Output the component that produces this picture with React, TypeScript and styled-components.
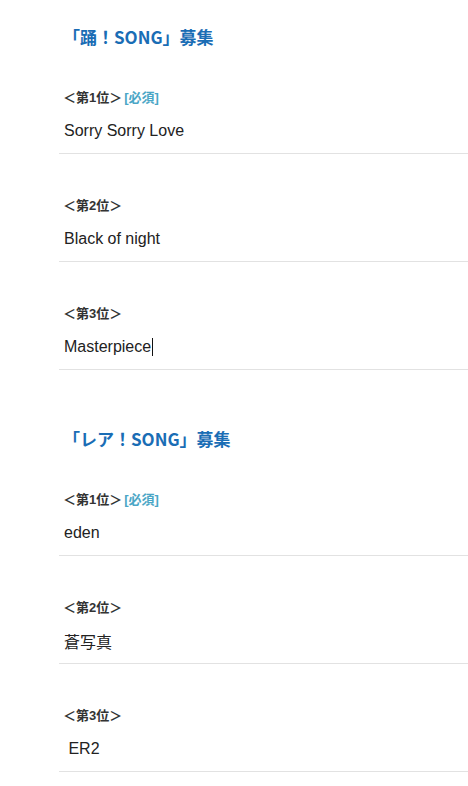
import styled, { createGlobalStyle } from "styled-components";

const GlobalStyle = createGlobalStyle`
  html, body {
    margin: 0;
    padding: 0;
    background: #ffffff;
  }
  body {
    font-family: "Liberation Sans", "Noto Sans CJK JP", sans-serif;
    color: #222222;
  }
`;

const Page = styled.div`
  display: flex;
  flex-direction: column;
  gap: 56px;
  padding: 24px 0 0 59px;
`;

const Section = styled.section`
  display: flex;
  flex-direction: column;
  gap: 38px;
`;

const SectionTitle = styled.h2`
  margin: 0;
  padding-left: 4px;
  font-family: "Noto Sans CJK JP", sans-serif;
  font-size: 17px;
  font-weight: 700;
  line-height: 26px;
  color: #1a6db5;
`;

const List = styled.div`
  display: flex;
  flex-direction: column;
  gap: 42px;
`;

const Item = styled.div`
  display: flex;
  flex-direction: column;
  border-bottom: 1px solid #e2e2e2;
`;

const Label = styled.div`
  padding-left: 4px;
  font-family: "Liberation Sans", "Noto Sans CJK JP", sans-serif;
  font-size: 13px;
  font-weight: 700;
  line-height: 20px;
  color: #333333;
`;

const Required = styled.span`
  margin-left: 2px;
  color: #4aa6c6;
`;

const Field = styled.div`
  display: flex;
  align-items: center;
  height: 45px;
  padding-left: 5px;
  font-family: "Liberation Sans", "Noto Sans CJK JP", sans-serif;
  font-size: 16px;
  color: #222222;
  white-space: pre;
`;

const Caret = styled.span`
  display: inline-block;
  width: 1px;
  height: 18px;
  margin-left: 1px;
  background: #111111;
`;

interface Entry {
  rank: number;
  value: string;
  required?: boolean;
  focused?: boolean;
}

interface Group {
  title: string;
  entries: Entry[];
}

const groups: Group[] = [
  {
    title: "「踊！SONG」募集",
    entries: [
      { rank: 1, value: "Sorry Sorry Love", required: true },
      { rank: 2, value: "Black of night" },
      { rank: 3, value: "Masterpiece", focused: true },
    ],
  },
  {
    title: "「レア！SONG」募集",
    entries: [
      { rank: 1, value: "eden", required: true },
      { rank: 2, value: "蒼写真" },
      { rank: 3, value: " ER2" },
    ],
  },
];

export default function App() {
  return (
    <>
      <GlobalStyle />
      <Page>
        {groups.map((group) => (
          <Section key={group.title}>
            <SectionTitle>{group.title}</SectionTitle>
            <List>
              {group.entries.map((entry) => (
                <Item key={entry.rank}>
                  <Label>
                    ＜第{entry.rank}位＞
                    {entry.required && <Required>[必須]</Required>}
                  </Label>
                  <Field>
                    {entry.value}
                    {entry.focused && <Caret />}
                  </Field>
                </Item>
              ))}
            </List>
          </Section>
        ))}
      </Page>
    </>
  );
}
